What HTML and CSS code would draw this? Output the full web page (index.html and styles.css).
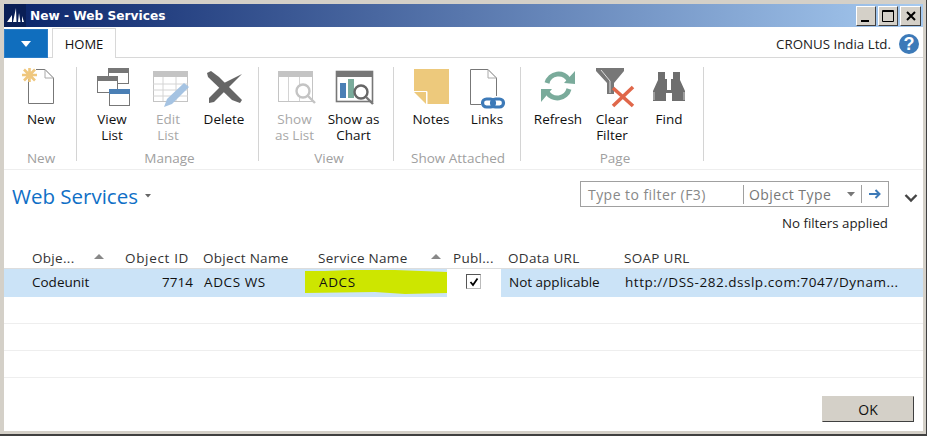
FILE: index.html
```html
<!DOCTYPE html>
<html lang="en">
<head>
<meta charset="utf-8">
<title>New - Web Services</title>
<link rel="stylesheet" href="styles.css">
</head>
<body>
<div class="window">
  <div class="frame">
    <header class="titlebar">
      <span class="app-icon">
        <svg width="22" height="23" viewBox="0 0 22 23"><path d="M3 18 L8 11 L8 18Z M9 18 L12 4 L12.5 18Z M14 18 L15 9 L16.5 18Z M18 18 L18 12 L20 18Z" fill="#fff"/></svg>
      </span>
      <span class="title">New - Web Services</span>
      <div class="win-btns">
        <button class="win-btn"><svg width="14" height="14" viewBox="0 0 14 14"><rect x="2" y="11" width="8" height="2" fill="#000"/></svg></button>
        <button class="win-btn"><svg width="14" height="14" viewBox="0 0 14 14"><path d="M1.5 1.5H12.5V12.5H1.5Z M1.5 2.5H12.5" fill="none" stroke="#000"/></svg></button>
        <button class="win-btn win-close"><svg width="14" height="14" viewBox="0 0 14 14"><path d="M3 3L11 11M11 3L3 11" stroke="#000" stroke-width="2"/></svg></button>
      </div>
    </header>

    <div class="tabbar">
      <button class="file-btn"><svg width="10" height="6" viewBox="0 0 10 6"><path d="M0 0H10L5 6Z" fill="#fff"/></svg></button>
      <div class="tab">HOME</div>
      <div class="company">CRONUS India Ltd.</div>
      <span class="help">?</span>
    </div>

    <section class="ribbon">
      <div class="group group-new">
        <div class="buttons">
          <div class="rb">
            <svg class="ic" viewBox="0 0 40 40"><path d="M7.5 13V37.5H32.5V12L24 3.5H15" fill="#fff" stroke="#777"/><path d="M24 3.5V12H32.5" fill="none" stroke="#aaa"/><path d="M8.5 2V16M1 9H16M3 3.5L14 14.500M14 3.500L3 14.500" stroke="#efc77e" stroke-width="2.6"/></svg>
            <span>New</span>
          </div>
        </div>
        <div class="glabel">New</div>
      </div>

      <div class="group group-manage">
        <div class="buttons">
          <div class="rb">
            <svg class="ic" viewBox="0 0 40 40"><rect x="16.500" y="2.500" width="20" height="15" fill="#fff" stroke="#777"/><rect x="16" y="2" width="21" height="5" fill="#777"/><rect x="5.500" y="10.500" width="20" height="16" fill="#fff" stroke="#777"/><rect x="5" y="10" width="21" height="5" fill="#777"/><rect x="17.500" y="23.500" width="20" height="16" fill="#fff" stroke="#777"/><rect x="17" y="23" width="21" height="5" fill="#4a7fb5"/></svg>
            <span>View<br>List</span>
          </div>
          <div class="rb off">
            <svg class="ic" viewBox="0 0 40 40"><rect x="5.500" y="5.500" width="34" height="30" fill="#fff" stroke="#c4c4c4"/><rect x="5" y="5" width="35" height="6" fill="#c4c4c4"/><path d="M5 18H40M5 24H40M5 30H40M15 11V35M28 11V35" stroke="#d4d4d4"/><path d="M16 41L19 33L36 17L41 21L24 38Z" fill="#a5c3e2"/></svg>
            <span>Edit<br>List</span>
          </div>
          <div class="rb">
            <svg class="ic" viewBox="0 0 40 40"><path d="M3 7L7 5L15 11L38 34L36 37L28 34L4 11Z" fill="#666"/><path d="M38 8L20 17L5 32L5 37L10 36L24 22Z" fill="#666"/></svg>
            <span>Delete</span>
          </div>
        </div>
        <div class="glabel">Manage</div>
      </div>

      <div class="group group-view">
        <div class="buttons">
          <div class="rb wide off">
            <svg class="ic" viewBox="0 0 40 40"><rect x="3.500" y="5.500" width="34" height="30" fill="#fff" stroke="#c4c4c4"/><rect x="3" y="5" width="35" height="6" fill="#c4c4c4"/><path d="M13.500 11V35M24.500 11V35" stroke="#d4d4d4"/><circle cx="28" cy="25" r="6.500" fill="#fff" stroke="#c4c4c4" stroke-width="2.400"/><path d="M33 30L40 37" stroke="#c4c4c4" stroke-width="2.400"/></svg>
            <span>Show<br>as List</span>
          </div>
          <div class="rb wide">
            <svg class="ic" viewBox="0 0 40 40"><rect x="2.500" y="5.500" width="36" height="30" fill="#fff" stroke="#777" stroke-width="1.600"/><rect x="2" y="5" width="37" height="6" fill="#777"/><rect x="6" y="17" width="6" height="15" fill="#4a7fb5"/><rect x="14" y="13" width="6" height="19" fill="#7aab9b"/><circle cx="27" cy="26" r="6.500" fill="#fff" stroke="#666" stroke-width="2.400"/><path d="M32 31L39 38" stroke="#777" stroke-width="2.400"/></svg>
            <span>Show as<br>Chart</span>
          </div>
        </div>
        <div class="glabel">View</div>
      </div>

      <div class="group group-attach">
        <div class="buttons">
          <div class="rb">
            <svg class="ic" viewBox="0 0 40 40"><path d="M3 3H38V38H16V25H3Z" fill="#edc97c"/><path d="M3 26H15V38Z" fill="#edc97c"/><path d="M3 25.500H16V38" fill="none" stroke="#fff"/></svg>
            <span>Notes</span>
          </div>
          <div class="rb">
            <svg class="ic" viewBox="0 0 40 40"><path d="M3.500 3.500H21L29.500 12V30M3.500 3.500V38.500H14" fill="#fff" stroke="#777"/><path d="M21 3.500V12H29.500" fill="none" stroke="#aaa"/><g fill="none" stroke="#3d7ab8" stroke-width="3.200"><rect x="15.500" y="33" width="12" height="8" rx="4"/><rect x="24.500" y="33" width="12" height="8" rx="4"/></g></svg>
            <span>Links</span>
          </div>
        </div>
        <div class="glabel">Show Attached</div>
      </div>

      <div class="group group-page">
        <div class="buttons">
          <div class="rb">
            <svg class="ic" viewBox="0 0 40 40"><g fill="none" stroke="#7aab9b" stroke-width="5"><path d="M9 17A12 12 0 0 1 31 14"/><path d="M31 23A12 12 0 0 1 9 26"/></g><path d="M26 17L37 5V18Z M14 23L3 36V23Z" fill="#7aab9b"/></svg>
            <span>Refresh</span>
          </div>
          <div class="rb w52">
            <svg class="ic" viewBox="0 0 40 40"><g transform="translate(3 0)"><path d="M1 2H29V5L19 17V28H12V17L1 5Z" fill="#777"/><path d="M6 4L15 15V27" fill="none" stroke="#ddd"/><path d="M18 22L38 40M38 21L18 40" stroke="#e0674a" stroke-width="3.600"/></g></svg>
            <span>Clear<br>Filter</span>
          </div>
          <div class="rb w62">
            <svg class="ic" viewBox="0 0 40 40"><path d="M9 6H16V13H18V24H22V13H24V6H31V14L36 25V35H23V27H17V35H4V25L9 14Z" fill="#6e6e6e"/><path d="M5 26V34M35 26V34" stroke="#ccc"/></svg>
            <span>Find</span>
          </div>
        </div>
        <div class="glabel">Page</div>
      </div>
    </section>

    <section class="listhead">
      <div class="heading">
        <h1>Web Services</h1>
        <svg width="6" height="4" viewBox="0 0 6 4"><path d="M0 0H6L3 3.500Z" fill="#666"/></svg>
      </div>
      <div class="filter-area">
        <div class="filter">
          <span class="f-input">Type to filter (F3)</span>
          <span class="f-field">Object Type</span>
          <svg class="f-caret" width="8" height="5" viewBox="0 0 8 5"><path d="M0 0H8L4 4.500Z" fill="#777"/></svg>
          <span class="f-go"><svg width="12" height="10" viewBox="0 0 12 10"><path d="M0 5H10M6.500 1L10.500 5L6.500 9" fill="none" stroke="#3d7ab8" stroke-width="2"/></svg></span>
        </div>
        <div class="no-filter">No filters applied</div>
      </div>
      <svg class="expand" width="14" height="10" viewBox="0 0 14 10"><path d="M1.500 2L7 7.500L12.500 2" fill="none" stroke="#444" stroke-width="2.400"/></svg>
    </section>

    <section class="grid">
      <div class="row head">
        <div class="c c1">Obje...<svg class="sort s1" width="10" height="5" viewBox="0 0 10 5"><path d="M0 5H10L5 0Z" fill="#888"/></svg></div>
        <div class="c c2">Object ID</div>
        <div class="c c3">Object Name</div>
        <div class="c c4">Service Name<svg class="sort s4" width="10" height="5" viewBox="0 0 10 5"><path d="M0 5H10L5 0Z" fill="#888"/></svg></div>
        <div class="c c5">Publ...</div>
        <div class="c c6">OData URL</div>
        <div class="c c7">SOAP URL</div>
      </div>
      <div class="row sel">
        <div class="c c1">Codeunit</div>
        <div class="c c2">7714</div>
        <div class="c c3 spaced">ADCS WS</div>
        <div class="c c4">
          <svg class="marker" width="142" height="26" viewBox="0 0 142 26"><path d="M0 2H20L45 1H90L142 3V24L100 25L70 23L0 24Z" fill="#cde600"/></svg>
          <span class="over spaced">ADCS</span>
        </div>
        <div class="c c5"><span class="check"><svg width="10" height="10" viewBox="0 0 10 10"><path d="M1.500 5L4 8L8.500 1.500" fill="none" stroke="#000" stroke-width="1.800"/></svg></span></div>
        <div class="c c6">Not applicable</div>
        <div class="c c7"><span class="url">http://DSS-282.dsslp.com:7047/Dynam...</span></div>
      </div>
      <div class="row empty"></div>
      <div class="row empty"></div>
      <div class="row empty"></div>
    </section>

    <footer class="foot">
      <button class="ok">OK</button>
    </footer>
  </div>
</div>
</body>
</html>
```

FILE: styles.css
```css
* { box-sizing: border-box; }
html, body { margin: 0; padding: 0; }
body { width: 927px; height: 436px; overflow: hidden; font-family: "Open Sans", "Noto Sans", sans-serif; font-size: 13.5px; color: #111; }

.window { width: 927px; height: 436px; border-right: 1px solid #404040; border-bottom: 2px solid #404040; background: #d4d0c8; }
.frame { height: 100%; border: 4px solid #d4d0c8; border-right-width: 3px; border-bottom-width: 3px; background: #fff; display: flex; flex-direction: column; }

.titlebar { height: 23px; flex: none; display: flex; align-items: center; background: linear-gradient(90deg, #0a246a, #a6caf0); color: #fff; }
.app-icon { width: 22px; height: 23px; background: #0a1f56; display: block; }
.title { margin-left: 4px; font: bold 12.2px "DejaVu Sans", sans-serif; }
.win-btns { margin-left: auto; display: flex; gap: 2px; padding-right: 2px; }
.win-btn { width: 20px; height: 20px; padding: 2px; background: #d4d0c8; border: 1px solid; border-color: #fff #404040 #404040 #fff; display: flex; align-items: center; justify-content: center; }
.win-close { width: 21px; }

.tabbar { height: 31px; flex: none; display: flex; align-items: flex-end; border-bottom: 1px solid #d8d8d8; }
.file-btn { width: 44px; height: 29px; align-self: flex-start; margin-top: 2px; padding: 0; background: #106ebe; border: 1px solid #2a7cc7; display: flex; align-items: center; justify-content: center; }
.tab { width: 64px; height: 30px; margin: 0 0 -1px 4px; background: #fff; border: 1px solid #d8d8d8; border-bottom: 0; display: flex; align-items: center; justify-content: center; font-size: 13px; }
.company { margin-left: auto; align-self: center; margin-top: 4px; font-size: 13.3px; color: #222; }
.help { width: 20px; height: 20px; margin: 0 4px 0 8px; align-self: center; margin-top: 4px; border-radius: 50%; background: #3d7ab8; color: #fff; font: bold 18px/20px "Liberation Sans", sans-serif; text-align: center; }

.ribbon { height: 112px; flex: none; display: flex; border-bottom: 1px solid #eee; padding-top: 9px; }
.group { height: 94px; display: flex; flex-direction: column; border-right: 1px solid #d4d4d4; }
.group-new { width: 73px; padding-left: 9px; }
.group-manage { width: 182px; padding-left: 7px; }
.group-view { width: 135px; padding-left: 6px; }
.group-attach { width: 127px; padding-left: 9px; }
.group-page { width: 183px; padding-left: 9px; }
.buttons { display: flex; height: 86px; flex: none; margin-top: -1px; }
.rb { width: 56px; display: flex; flex-direction: column; align-items: center; text-align: center; line-height: 16px; font-size: 13.5px; }
.rb.wide { width: 59px; }
.rb.w52 { width: 52px; }
.rb.w62 { width: 62px; }
.rb .ic { width: 40px; height: 40px; overflow: visible; flex: none; margin-bottom: 5px; }
.rb.off { color: #a8a8a8; }
.glabel { text-align: center; color: #a0a0a0; line-height: 12px; padding-right: 7px; }
.group-manage .glabel, .group-page .glabel { padding-right: 3px; }
.group-view .glabel { padding-right: 0; }

.listhead { height: 78px; flex: none; position: relative; display: flex; padding-left: 8px; }
.heading { display: flex; align-items: center; gap: 7px; height: 24px; margin-top: 14px; }
.heading h1 { margin: 0; font-weight: 400; font-size: 20.5px; color: #0f6fc6; }
.filter-area { margin-left: auto; margin-top: 11px; width: 309px; }
.filter { height: 26px; border: 1px solid #a0a0a0; display: flex; align-items: center; color: #777; }
.f-input { width: 163px; padding: 1px 0 0 7px; font-size: 14px; letter-spacing: .45px; border-right: 1px solid #a0a0a0; line-height: 18px; color: #888; }
.f-field { width: 103px; padding: 1px 0 0 5px; font-size: 14px; letter-spacing: .45px; line-height: 18px; }
.f-go { margin-left: 6px; padding-left: 7px; border-left: 1px solid #a0a0a0; height: 18px; display: flex; align-items: center; }
.no-filter { text-align: right; margin-top: 7px; padding-right: 1px; font-size: 13.3px; color: #222; line-height: 18px; }
.expand { margin: 23px 5px 0 15px; }

.grid { flex: none; }
.row { display: grid; grid-template-columns: 108px 85px 108px 142px 54px 117px 1fr; }
.row.head { height: 21px; line-height: 20px; color: #333; border-bottom: 1px solid #ddd; letter-spacing: .3px; }
.row.head .c2 { letter-spacing: .65px; }
.row.sel { height: 28px; line-height: 26px; background: #cbe3f7; color: #111; }
.row.empty { height: 27px; border-bottom: 1px solid #eee; }
.c { position: relative; white-space: nowrap; }
.c1 { padding-left: 28px; }
.c2 { text-align: right; padding-right: 8px; }
.sel .c2 { padding-right: 4px; }
.c3 { padding-left: 6px; }
.sel .c3 { padding-left: 7px; }
.c4 { padding-left: 13px; }
.sel .c4 { padding-left: 14px; }
.c5 { padding-left: 6px; }
.sel .c5 { background: #fff; padding: 5px 0 0 19px; line-height: 0; }
.c6 { padding-left: 7px; }
.sel .c6 { padding-left: 8px; }
.c7 { padding-left: 6px; }
.sel .c7 { padding-left: 7px; }
.spaced { letter-spacing: .6px; }
.url { letter-spacing: .53px; }
.sort { position: absolute; top: 6px; }
.s1 { left: 90px; }
.s4 { left: 126px; }
.marker { position: absolute; left: 0; top: 0; }
.over { position: relative; }
.check { width: 15px; height: 15px; display: flex; align-items: center; justify-content: center; border: 1px solid; border-color: #555 #bbb #bbb #555; background: #fff; }

.foot { margin-top: auto; display: flex; justify-content: flex-end; padding: 0 9px 9px 0; }
.ok { width: 92px; height: 26px; padding: 0; background: #d4d0c8; border: 1px solid; border-color: #d4d0c8 #404040 #404040 #d4d0c8; font: 14px "Open Sans", sans-serif; color: #111; }
```
